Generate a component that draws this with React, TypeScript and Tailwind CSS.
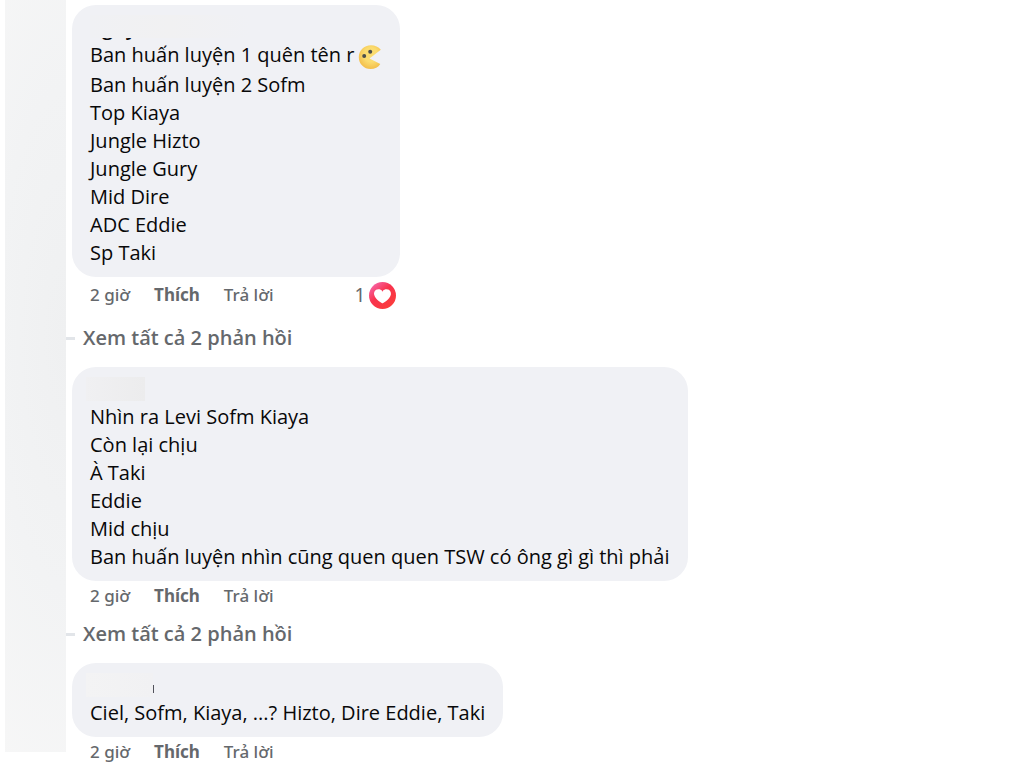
import type { ReactNode } from "react";

interface Comment {
  id: number;
  name: ReactNode;
  lines: ReactNode[];
  time: string;
  likes?: number;
  replies?: string;
}

function PacmanEmoji() {
  return (
    <svg viewBox="0 0 24 24" className="ml-1 mt-1 size-6" role="img" aria-label="pacman">
      <defs>
        <radialGradient id="pac" cx="0.55" cy="0.4" r="0.6">
          <stop offset="0.5" stopColor="#fbdc6f" />
          <stop offset="1" stopColor="#f3bf4b" />
        </radialGradient>
      </defs>
      <path
        d="M22.8 4.800C20.500 1.800 17 0.300 13 0.300 6 0.300 0.800 5.600 0.800 12.200S6 24 12.600 24c4.200 0 7.700-1.800 9.700-5L11.500 13.600Z"
        fill="url(#pac)"
      />
      <circle cx="6.200" cy="11" r="2" fill="#4b4e4c" />
      <circle cx="12.200" cy="6.800" r="2" fill="#4b4e4c" />
    </svg>
  );
}

function LoveIcon() {
  return (
    <svg viewBox="0 0 16 16" className="size-[27px]" role="img" aria-label="love">
      <defs>
        <linearGradient id="love" x1="0.1" y1="0.1" x2="0.8" y2="0.9">
          <stop offset="0" stopColor="#f765a8" />
          <stop offset="0.45" stopColor="#f8334e" />
          <stop offset="1" stopColor="#fb3c3c" />
        </linearGradient>
      </defs>
      <circle cx="8" cy="8" r="8" fill="url(#love)" />
      <path
        d="M10.473 4.300C8.275 4.300 8 5.900 8 5.900S7.726 4.300 5.528 4.300c-2.114 0-2.730 2-2.472 3.200C3.736 10.500 8 12.600 8 12.600s4.265-2.100 4.945-5.100c.257-1.200-.36-3.200-2.472-3.200"
        fill="#fff"
      />
    </svg>
  );
}

const COMMENTS: Comment[] = [
  {
    id: 1,
    name: (
      <span className="relative block h-full w-40 overflow-hidden">
        <span className="block pl-3 font-semibold">guy</span>
        <span className="absolute inset-x-0 top-0 h-[23px] bg-gradient-to-r from-[#f0f1f4] via-[#f1f1f2] to-[#f0f1f5]" />
      </span>
    ),
    lines: [
      <>
        Ban huấn luyện 1 quên tên r
        <PacmanEmoji />
      </>,
      "Ban huấn luyện 2 Sofm",
      "Top Kiaya",
      "Jungle Hizto",
      "Jungle Gury",
      "Mid Dire",
      "ADC Eddie",
      "Sp Taki",
    ],
    time: "2 giờ",
    likes: 1,
    replies: "Xem tất cả 2 phản hồi",
  },
  {
    id: 2,
    name: <span className="-ml-1 block h-6 w-[59px] bg-gradient-to-r from-[#f0f0f2] to-[#ececed]" />,
    lines: [
      "Nhìn ra Levi Sofm Kiaya",
      "Còn lại chịu",
      "À Taki",
      "Eddie",
      "Mid chịu",
      "Ban huấn luyện nhìn cũng quen quen TSW có ông gì gì thì phải",
    ],
    time: "2 giờ",
    replies: "Xem tất cả 2 phản hồi",
  },
  {
    id: 3,
    name: (
      <span className="flex h-6 items-end">
        <span className="-ml-1 h-full w-[67px] bg-gradient-to-r from-[#f3f3f4] to-[#f1f1f3]" />
        <span className="mb-1 h-2 w-px bg-[#50515a]" />
      </span>
    ),
    lines: ["Ciel, Sofm, Kiaya, ...? Hizto, Dire Eddie, Taki"],
    time: "2 giờ",
  },
];

function CommentItem({ comment }: { comment: Comment }) {
  const { name, lines, time, likes, replies } = comment;

  return (
    <li>
      <div className="ml-1.5 w-fit">
        <div className="rounded-3xl bg-[#f0f1f5] px-[18px] py-2.5 text-[20px] text-[#080809]">
          <div className="h-[26px] leading-[26px]">{name}</div>
          {lines.map((line, i) => (
            <p key={i} className={typeof line === "string" ? "leading-7" : "flex h-[30px] items-start leading-7"}>
              {line}
            </p>
          ))}
        </div>
        <div
          className={`flex items-center gap-6 pl-[18px] font-['Noto_Sans',sans-serif] text-[17px] text-[#65686c] ${likes ? "mb-0.5 h-9" : "h-[30px]"}`}
        >
          <a href="#time" className="font-medium">{time}</a>
          <button type="button" className="font-bold">Thích</button>
          <button type="button" className="font-medium">Trả lời</button>
          {likes && (
            <span className="mr-1 ml-auto flex items-center gap-1 text-[19px]">
              {likes}
              <LoveIcon />
            </span>
          )}
        </div>
      </div>
      {replies && (
        <div className="mb-1.5 flex h-[46px] items-center gap-2">
          <span className="h-[3px] w-[9px] bg-[#e2e5e9]" />
          <button type="button" className="text-[20px] font-semibold text-[#65686c]">
            {replies}
          </button>
        </div>
      )}
    </li>
  );
}

export default function App() {
  return (
    <main className="flex h-screen overflow-hidden bg-white pl-[5px] font-['Open_Sans','Noto_Sans',sans-serif]">
      <aside className="mb-2.5 w-[61px] shrink-0 bg-[radial-gradient(ellipse_140px_500px_at_100%_45%,#eff0f1,#f2f3f4_50%,#f7f7f7)]" />
      <ul className="min-w-0 flex-1 pt-[5px]">
        {COMMENTS.map((c) => (
          <CommentItem key={c.id} comment={c} />
        ))}
      </ul>
    </main>
  );
}
